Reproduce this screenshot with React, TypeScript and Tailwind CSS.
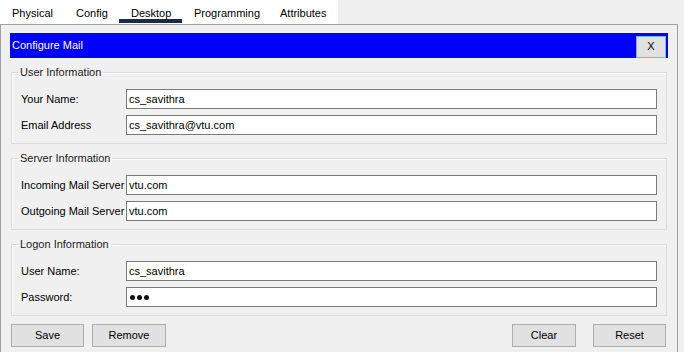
import React from "react";

const font = { fontFamily: '"Liberation Sans", Arial, sans-serif' };

function Field({ label, value, password }: { label: string; value: string; password?: boolean }) {
  return (
    <div className="flex items-center h-[20px]">
      <div className="w-[105px] whitespace-nowrap text-[11px] text-black leading-none">{label}</div>
      <div className="flex-1 h-[20px] bg-white border border-[#7a7a7a] flex items-center pl-[2px] text-[11px] text-black leading-none">
        {password ? (
          <div className="flex gap-[2px] pl-[1px]">
            <div className="w-[5px] h-[5px] rounded-full bg-[#111]" />
            <div className="w-[5px] h-[5px] rounded-full bg-[#111]" />
            <div className="w-[5px] h-[5px] rounded-full bg-[#111]" />
          </div>
        ) : (
          value
        )}
      </div>
    </div>
  );
}

function Group({ title, children }: { title: string; children: React.ReactNode }) {
  return (
    <fieldset className="mx-[1px] h-[78px] border border-[#dcdcdc] pl-[9px] pr-[9px] pt-[11px] shadow-[inset_1px_1px_0_#ffffff]">
      <legend className="ml-[-3px] px-[2px] text-[11px] h-[12px] text-[#1a1a1a] leading-[12px]">{title}</legend>
      <div className="flex flex-col gap-[6px]">{children}</div>
    </fieldset>
  );
}

function Btn({ label, w }: { label: string; w: string }) {
  return (
    <div className={`${w} h-[23px] bg-[#e1e1e1] border border-[#adadad] flex items-center justify-center text-[11px] text-black`}>
      {label}
    </div>
  );
}

export default function App() {
  const tabs = [
    { name: "Physical", w: "w-[64px]" },
    { name: "Config", w: "w-[55px]" },
    { name: "Desktop", w: "w-[63px]", active: true },
    { name: "Programming", w: "w-[86px]" },
    { name: "Attributes", w: "w-[70px]" },
  ];
  return (
    <div className="w-[684px] h-[352px] bg-[#f0f0f0] overflow-hidden flex flex-col" style={font}>
      <div className="flex h-[24px] w-[338px] bg-white">
        {tabs.map((t) => (
          <div key={t.name} className={`${t.w} h-full relative flex items-center pl-[12px] pt-[2px] text-[11px] text-black`}>
            {t.name}
            {t.active && <div className="absolute left-0 right-0 bottom-[1px] h-[4px] bg-[#1c2b40]" />}
          </div>
        ))}
      </div>
      <div className="w-[678px] flex-1 border-l border-t border-r border-[#a0a0a0] pl-[9px] pt-[8px]">
        <div className="w-[658px] flex flex-col">
          <div className="h-[25px] bg-[#0000ff] flex items-center justify-between pl-[2px] pr-[2px]">
            <span className="text-[11px] text-white">Configure Mail</span>
            <div className="w-[30px] h-[22px] mt-[2px] bg-[#e1e1e1] border border-[#7eb4ea] flex items-center justify-center text-[11px] text-black">
              X
            </div>
          </div>
          <div className="flex flex-col gap-[8px] mt-[8px]">
            <Group title="User Information">
              <Field label="Your Name:" value="cs_savithra" />
              <Field label="Email Address" value="cs_savithra@vtu.com" />
            </Group>
            <Group title="Server Information">
              <Field label="Incoming Mail Server" value="vtu.com" />
              <Field label="Outgoing Mail Server" value="vtu.com" />
            </Group>
            <Group title="Logon Information">
              <Field label="User Name:" value="cs_savithra" />
              <Field label="Password:" value="" password />
            </Group>
          </div>
          <div className="flex items-center mt-[8px] pl-[1px]">
            <Btn label="Save" w="w-[73px]" />
            <div className="w-[8px]" />
            <Btn label="Remove" w="w-[74px]" />
            <div className="flex-1" />
            <Btn label="Clear" w="w-[64px]" />
            <div className="w-[17px]" />
            <Btn label="Reset" w="w-[73px]" />
            <div className="w-[2px]" />
          </div>
        </div>
      </div>
    </div>
  );
}
